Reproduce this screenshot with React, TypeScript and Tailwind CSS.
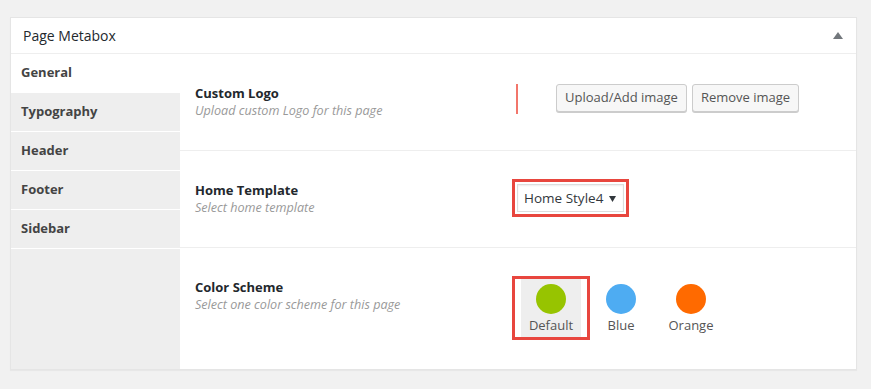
import { useState } from 'react'

const tabs = ['General', 'Typography', 'Header', 'Footer', 'Sidebar']

const schemes = [
  { name: 'Default', color: 'bg-[#97c400]' },
  { name: 'Blue', color: 'bg-[#4eacf2]' },
  { name: 'Orange', color: 'bg-[#ff6a00]' },
]

function FieldLabel({ title, desc }: { title: string; desc: string }) {
  return (
    <div className="w-[332px] shrink-0 pl-[15px]">
      <div className="text-[13px] font-bold leading-[18px] text-[#23282d]">{title}</div>
      <div className="text-[12.6px] italic leading-[18px] text-[#999]">{desc}</div>
    </div>
  )
}

function WpButton({ children }: { children: string }) {
  return (
    <button className="h-[28px] px-[8px] rounded-[3px] border border-[#ccc] bg-[#f7f7f7] text-[13px] text-[#555] shadow-[0_1px_0_#ccc] cursor-pointer">
      {children}
    </button>
  )
}

export default function App() {
  const [active, setActive] = useState('General')
  const [scheme, setScheme] = useState('Default')

  return (
    <div className="w-[871px] h-[389px] bg-[#f1f1f1] pt-[17px] pl-[10px] font-['Open_Sans',sans-serif]">
      <div className="w-[847px] h-[353px] bg-white border border-[#e5e5e5] shadow-[0_1px_1px_rgba(0,0,0,0.04)] flex flex-col">
        <div className="h-[36px] shrink-0 flex items-center justify-between px-[12px] border-b border-[#eee]">
          <h2 className="text-[14px] text-[#23282d]">Page Metabox</h2>
          <svg width="10" height="7" viewBox="0 0 10 7" className="mr-[1px]">
            <path d="M5 0 L10 7 L0 7 Z" fill="#72777c" />
          </svg>
        </div>

        <div className="flex flex-1">
          <ul className="w-[169px] shrink-0 bg-[#eee]">
            {tabs.map(t => (
              <li key={t} onClick={() => setActive(t)}
                className={`h-[39px] flex items-center pl-[10px] border-b border-white text-[13px] font-bold text-[#444] cursor-pointer ${active === t ? 'bg-white' : ''}`}>
                {t}
              </li>
            ))}
          </ul>

          <div className="flex-1 flex flex-col">
            <div className="h-[97px] shrink-0 flex items-start pt-[30px] border-b border-[#eee]">
              <FieldLabel title="Custom Logo" desc="Upload custom Logo for this page" />
              <div className="flex items-start">
                <div className="w-[2px] h-[30px] bg-[#f2766b] ml-[4px]"></div>
                <div className="flex gap-[5px] ml-[38px]">
                  <WpButton>Upload/Add image</WpButton>
                  <WpButton>Remove image</WpButton>
                </div>
              </div>
            </div>

            <div className="h-[97px] shrink-0 flex items-start pt-[30px] border-b border-[#eee]">
              <FieldLabel title="Home Template" desc="Select home template" />
              <div className="-mt-[2px] border-[3px] border-[#e8463e] p-[2px]">
                <div className="w-[107px] h-[28px] border border-[#ddd] shadow-[inset_0_1px_2px_rgba(0,0,0,0.07)] flex items-center justify-between pl-[6px] pr-[7px] text-[13.5px] text-[#32373c] whitespace-nowrap">
                  <span>Home Style4</span>
                  <svg width="7" height="7" viewBox="0 0 7 7">
                    <path d="M0 1 L7 1 L3.5 7 Z" fill="#32373c" />
                  </svg>
                </div>
              </div>
            </div>

            <div className="flex-1 flex items-start pt-[30px]">
              <FieldLabel title="Color Scheme" desc="Select one color scheme for this page" />
              <div className="-mt-[2px] flex">
                {schemes.map(s => (
                  <div key={s.name} onClick={() => setScheme(s.name)}
                    className={`w-[78px] h-[64px] -mr-[8px] border-[3px] px-[6px] cursor-pointer ${scheme === s.name ? 'border-[#e8463e]' : 'border-transparent'}`}>
                    <div className={`h-full flex flex-col items-center pt-[5px] ${scheme === s.name ? 'bg-[#eee]' : ''}`}>
                      <div className={`w-[30px] h-[30px] rounded-full ${s.color}`}></div>
                      <div className="mt-[2px] text-[13px] text-[#555]">{s.name}</div>
                    </div>
                  </div>
                ))}
              </div>
            </div>
          </div>
        </div>
      </div>
    </div>
  )
}
